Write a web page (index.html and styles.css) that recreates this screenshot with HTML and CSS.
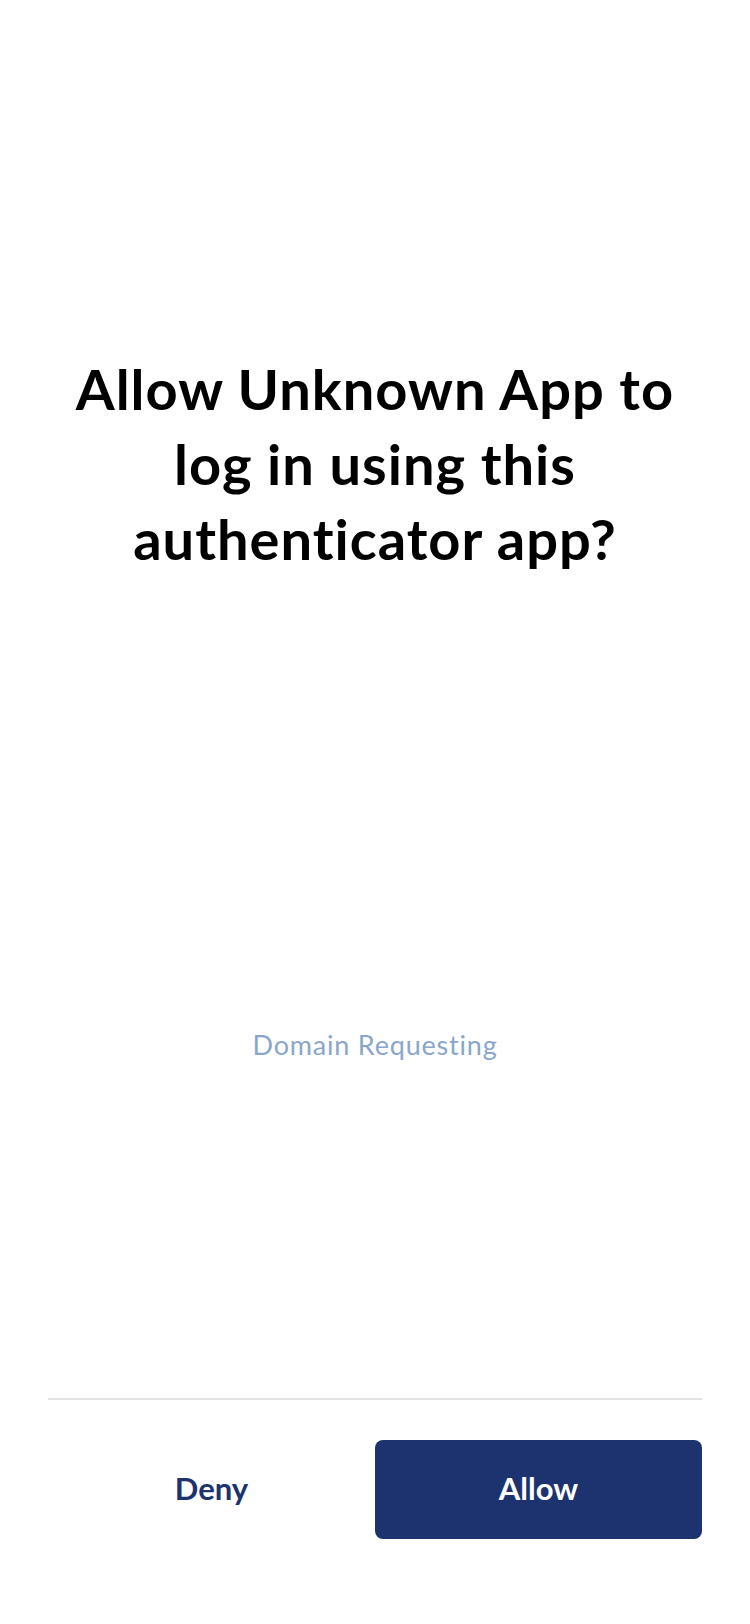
FILE: index.html
```html
<!DOCTYPE html>
<html lang="en">
<head>
<meta charset="utf-8">
<title>Allow app</title>
<link rel="stylesheet" href="styles.css">
</head>
<body>
<main class="screen">
  <h1 class="title">Allow Unknown App to<br>log in using this<br>authenticator app?</h1>
  <p class="domain">Domain Requesting</p>
  <footer class="footer">
    <div class="divider"></div>
    <div class="actions">
      <button class="btn btn-deny">Deny</button>
      <button class="btn btn-allow">Allow</button>
    </div>
  </footer>
</main>
</body>
</html>
```
FILE: styles.css
```css
html, body {
  margin: 0;
  padding: 0;
  background: #ffffff;
}
.screen {
  box-sizing: border-box;
  width: 750px;
  height: 1624px;
  padding: 0 48px 85px;
  display: flex;
  flex-direction: column;
  font-family: Lato, "Noto Sans", sans-serif;
}
.title {
  margin: 351px 0 0;
  font-size: 56px;
  line-height: 75px;
  letter-spacing: 1px;
  font-weight: 700;
  color: #000000;
  text-align: center;
}
.domain {
  margin: 453px 0 0;
  font-size: 27px;
  line-height: 32px;
  letter-spacing: 0.8px;
  font-weight: 400;
  color: #8aa6ca;
  text-align: center;
}
.footer {
  margin-top: auto;
}
.divider {
  height: 2px;
  background: #e2e2e2;
}
.actions {
  display: grid;
  grid-template-columns: 1fr 1fr;
  margin-top: 40px;
}
.btn {
  box-sizing: border-box;
  height: 99px;
  padding: 0 0 4px;
  border: 0;
  border-radius: 8px;
  font-family: inherit;
  font-size: 31px;
  font-weight: 700;
  cursor: pointer;
}
.btn-deny {
  background: transparent;
  color: #1c3370;
}
.btn-allow {
  background: #1c3370;
  color: #ffffff;
}
```
